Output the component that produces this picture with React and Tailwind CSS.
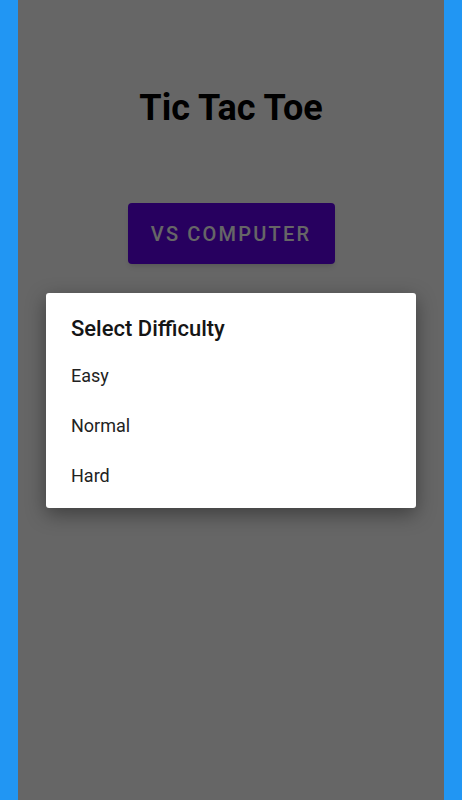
const levels = ["Easy", "Normal", "Hard"];

export default function App() {
  return (
    <div
      className="h-screen w-full bg-[#2196F3] flex justify-center"
      style={{ fontFamily: "Roboto, 'Noto Sans', sans-serif" }}
    >
      <div className="relative w-[426px] h-full bg-white flex flex-col items-center">
        <h1 className="pt-[88px] text-[36px] leading-[40px] font-bold text-black">
          Tic Tac Toe
        </h1>
        <button className="mt-[75px] w-[207px] h-[61px] rounded-[4px] bg-[#6200EE] text-white text-[20px] font-medium tracking-[2.2px] shadow-md">
          VS COMPUTER
        </button>

        <div className="absolute inset-0 bg-black/60 flex items-center justify-center">
          <div className="w-[370px] bg-white rounded-[3px] shadow-[0_6px_20px_rgba(0,0,0,0.4)] pt-[20px] pb-[7px]">
            <h2 className="px-[25px] h-8 leading-8 text-[22px] font-medium text-[#151515]">
              Select Difficulty
            </h2>
            <ul className="mt-[6px]">
              {levels.map((level) => (
                <li
                  key={level}
                  className="px-[25px] h-[50px] leading-[50px] text-[18px] text-[#222]"
                >
                  {level}
                </li>
              ))}
            </ul>
          </div>
        </div>
      </div>
    </div>
  );
}
